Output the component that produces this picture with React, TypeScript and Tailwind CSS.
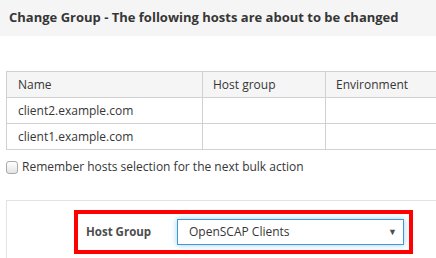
import React from "react";

const hosts = ["client2.example.com", "client1.example.com"];

export default function App() {
  return (
    <div className="w-[436px] h-[258px] overflow-hidden bg-white text-[#363636] font-['Open_Sans',sans-serif]">
      <div className="h-[36px] bg-[#f5f5f5] flex items-center px-[9px]">
        <h4 className="text-[13px] font-bold whitespace-nowrap">
          Change Group - The following hosts are about to be changed
        </h4>
      </div>

      <div className="ml-[6px] mt-[35px] w-[460px]">
        <table className="w-full border-collapse text-[12px] table-fixed">
          <thead>
            <tr className="bg-[#f5f5f5] h-[26px]">
              <th className="w-[196px] border border-[#d1d1d1] text-left font-normal px-[11px]">Name</th>
              <th className="w-[123px] border border-[#d1d1d1] text-left font-normal px-[10px]">Host group</th>
              <th className="border border-[#d1d1d1] text-left font-normal px-[10px]">Environment</th>
            </tr>
          </thead>
          <tbody>
            {hosts.map((h) => (
              <tr key={h} className="h-[26px]">
                <td className="border border-[#d1d1d1] px-[11px]">{h}</td>
                <td className="border border-[#d1d1d1]"></td>
                <td className="border border-[#d1d1d1]"></td>
              </tr>
            ))}
          </tbody>
        </table>
      </div>

      <label className="flex items-center gap-[4px] ml-[6px] mt-[10px] h-[14px] text-[12px] whitespace-nowrap">
        <span className="w-[12px] h-[13px] rounded-[3px] border border-[#a9a9a9] bg-gradient-to-b from-white to-[#e3e3e3]" />
        Remember hosts selection for the next bulk action
      </label>

      <div className="ml-[6px] mt-[26px] border-t border-l border-[#e3e3e3] h-[80px] pt-[9px] pl-[67px]">
        <div className="w-[339px] h-[44px] border-4 border-[#ff0000] flex items-center pl-[8px]">
          <span className="w-[91px] text-[11.5px] font-bold text-[#4d4d4d]">Host Group</span>
          <div className="w-[227px] h-[26px] border border-[#3b99d9] shadow-[0_0_6px_rgba(102,175,233,0.6)] flex items-center justify-between pl-[11px] pr-[6px] text-[12px]">
            <span>OpenSCAP Clients</span>
            <span className="text-[9px] text-[#4d4d4d]">▼</span>
          </div>
        </div>
      </div>
    </div>
  );
}
